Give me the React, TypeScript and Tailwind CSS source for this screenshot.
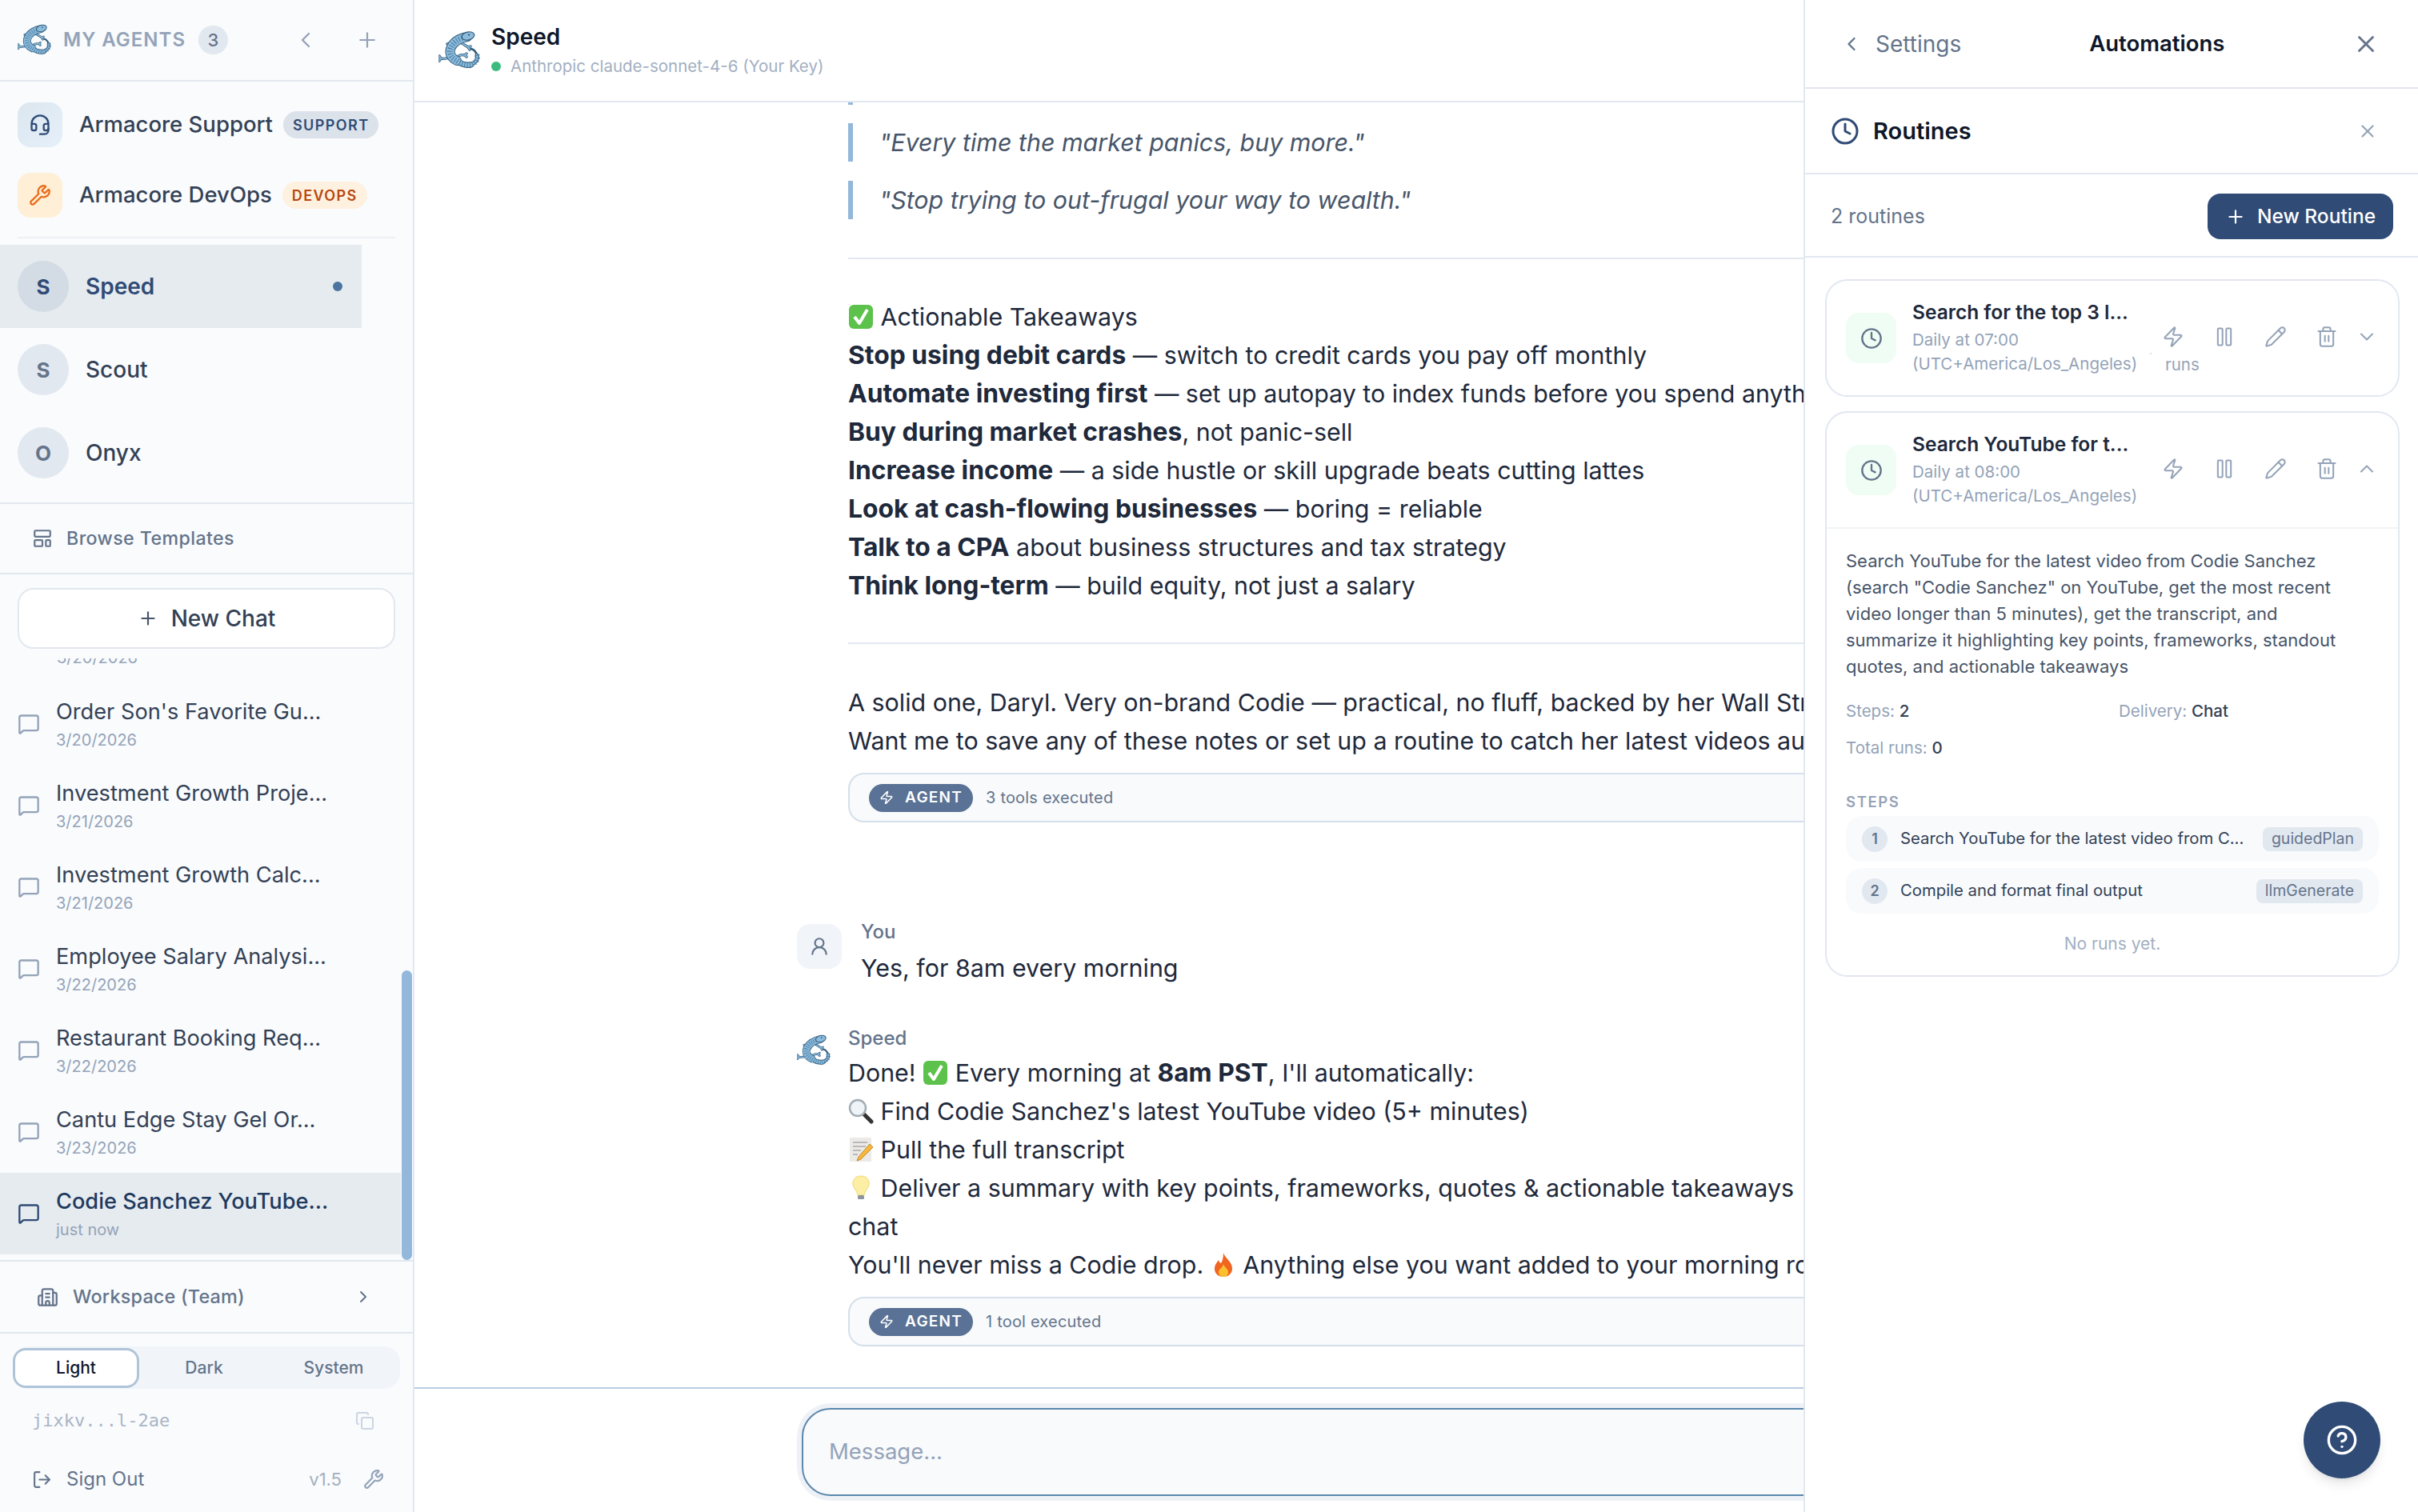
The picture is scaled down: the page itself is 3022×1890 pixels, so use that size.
import { Building2, ChevronDown, ChevronLeft, ChevronRight, ChevronUp, CircleHelp, Clock, Copy, Headset, LayoutTemplate, LogOut, MessageSquare, Pause, Pencil, Plus, Trash2, UserRound, Wrench, X, Zap } from 'lucide-react';
import type { ReactNode } from 'react';

// lizard mark, traced by hand from the reference
const Lizard = ({ className }: { className: string }) => {
  const legs = 'M33 21 C38 23 42 26 45 28 M45 28 L48 27 M45 28 L47 31 M26 40 C20 42 15 43 11 42 M11 42 L9 39 M11 42 L9 45 M30 42 C33 38 37 37 41 38 M41 38 L43 36 M41 38 L43 40 M25 24 C23 23 21 23 19 24';
  const body = 'M44 15 C33 17 26 22 23 30 C21 37 25 42 31 45';
  const tailA = 'M31 45 C36 49 43 51 48 50';
  const tailB = 'M48 50 C54 48 58 43 56 38';
  const tailC = 'M56 38 C55 34 52 31 49 30';
  return (
    <svg viewBox="8 7 52 50" fill="none" strokeLinecap="round" className={`shrink-0 ${className}`}>
      <path d={legs} stroke="#2f5a7a" strokeWidth="3.4" />
      <path d={legs} stroke="#8cbbdc" strokeWidth="1.8" />
      <path d={body} stroke="#2f5a7a" strokeWidth="12" />
      <path d={tailA} stroke="#2f5a7a" strokeWidth="7.5" />
      <path d={tailB} stroke="#2f5a7a" strokeWidth="5" />
      <path d={tailC} stroke="#2f5a7a" strokeWidth="2.6" />
      <path d={body} stroke="#8cbbdc" strokeWidth="10" />
      <path d={tailA} stroke="#8cbbdc" strokeWidth="5.5" />
      <path d={tailB} stroke="#8cbbdc" strokeWidth="3" />
      <path d={`${body} C36 49 43 51 48 50 C54 48 58 43 56 38`} stroke="#3f7297" strokeWidth="7" strokeDasharray="0.9 2.4" strokeLinecap="butt" />
      <ellipse cx="45" cy="14" rx="8" ry="5" transform="rotate(-14 45 14)" fill="#8cbbdc" stroke="#2f5a7a" strokeWidth="1.2" />
      <circle cx="46" cy="12.5" r="1" fill="#1f3d55" />
    </svg>
  );
};

const CheckEmoji = () => (
  <svg viewBox="0 0 32 32" className="inline-block w-[32px] h-[32px] align-[-5px]">
    <rect x="1" y="1" width="30" height="30" rx="6" fill="#5cc24b" />
    <path d="M8 16 L14 24 L24 7" fill="none" stroke="#fff" strokeWidth="4" strokeLinejoin="round" />
  </svg>
);

const SearchEmoji = () => (
  <svg viewBox="0 0 32 32" className="inline-block w-[32px] h-[32px] align-[-5px]">
    <path d="M19 19 L29 29" stroke="#333" strokeWidth="5" strokeLinecap="round" />
    <circle cx="12" cy="12" r="10" fill="#eef4f8" stroke="#a3adb5" strokeWidth="2.5" />
  </svg>
);

const MemoEmoji = () => (
  <svg viewBox="0 0 32 32" className="inline-block w-[32px] h-[32px] align-[-5px]">
    <rect x="2" y="1" width="27" height="30" fill="#eceae6" />
    <path d="M6 7 H24 M6 12 H22 M6 17 H16 M6 22 H12" stroke="#a9a9a9" strokeWidth="1.5" />
    <path d="M27 9 L13 25 L11 30 L16 28 L31 13 Z" fill="#f5b93e" stroke="#c8862a" strokeWidth="1" />
  </svg>
);

const BulbEmoji = () => (
  <svg viewBox="0 0 32 32" className="inline-block w-[32px] h-[32px] align-[-5px]">
    <path d="M16 1 C8 1 5 7 6 12 C7 17 11 19 12 25 H20 C21 19 25 17 26 12 C27 7 24 1 16 1 Z" fill="#fdeea6" stroke="#f4d96c" />
    <rect x="12" y="25" width="8" height="5" rx="1.5" fill="#8d949b" />
  </svg>
);

const FireEmoji = () => (
  <svg viewBox="0 0 32 32" className="inline-block w-[32px] h-[32px] align-[-5px]">
    <path d="M16 1 C18 8 27 12 27 21 C27 27 22 31 16 31 C10 31 5 27 5 21 C5 16 8 13 10 10 C11 13 12 14 13 14 C15 11 16 6 16 1 Z" fill="#f0651f" />
    <path d="M16 15 C17 19 22 21 22 25 C22 29 19 31 16 31 C13 31 10 29 10 25 C10 21 15 20 16 15 Z" fill="#fbc02d" />
  </svg>
);

const chats = [
  { title: "Order Son's Favorite Gu...", date: '3/20/2026' },
  { title: 'Investment Growth Proje...', date: '3/21/2026' },
  { title: 'Investment Growth Calc...', date: '3/21/2026' },
  { title: 'Employee Salary Analysi...', date: '3/22/2026' },
  { title: 'Restaurant Booking Req...', date: '3/22/2026' },
  { title: 'Cantu Edge Stay Gel Or...', date: '3/23/2026' },
];

const AgentRow = ({ letter, name, active }: { letter: string; name: string; active?: boolean }) => (
  <div className={`h-[104px] flex items-center pl-[22px] pr-[24px] ${active ? 'bg-[#e6ebef]' : ''}`}>
    <div className={`w-[64px] h-[64px] shrink-0 rounded-full flex items-center justify-center text-[26px] font-bold ${active ? 'bg-[#d3dce4] text-[#2f4b76]' : 'bg-[#e2e8f0] text-[#64748b]'}`}>{letter}</div>
    <span className={`ml-[21px] flex-1 text-[28px] ${active ? 'font-semibold text-[#2f4b76]' : 'font-medium text-[#334155]'}`}>{name}</span>
    {active && <span className="w-[12px] h-[12px] rounded-full bg-[#4a759f]" />}
  </div>
);

const Sidebar = () => (
  <aside className="w-[518px] shrink-0 h-full flex flex-col border-r-2 border-[#e2e8f0] bg-[#f9fbfd] pb-[23px]">
    <div className="h-[102px] shrink-0 flex items-center pl-[22px] border-b-2 border-[#e2e8f0]">
      <Lizard className="w-[42px] h-[42px]" />
      <span className="ml-[15px] text-[24px] font-semibold tracking-[1px] text-[#94a3b8]">MY AGENTS</span>
      <span className="ml-[16px] w-[37px] h-[36px] rounded-full bg-[#e2e8f0] text-[22px] font-medium text-[#64748b] flex items-center justify-center">3</span>
      <ChevronLeft className="ml-[81px] w-[32px] h-[32px] text-[#94a3b8]" strokeWidth={1.75} />
      <Plus className="ml-[46px] w-[30px] h-[30px] text-[#94a3b8]" strokeWidth={1.75} />
    </div>
    <div className="shrink-0 px-[22px] pt-[26px] flex flex-col gap-[32px]">
      <div className="flex items-center">
        <div className="w-[56px] h-[56px] shrink-0 rounded-[16px] bg-gradient-to-br from-[#dbe6ef] to-[#e5f0fa] flex items-center justify-center">
          <Headset className="w-[28px] h-[28px] text-[#2f4b76]" strokeWidth={2} />
        </div>
        <span className="ml-[21px] text-[27.5px] font-medium text-[#334155] whitespace-nowrap">Armacore Support</span>
        <span className="ml-[13px] h-[34px] px-[12px] rounded-full bg-[#dbe2e9] text-[18px] font-semibold tracking-[1.4px] text-[#2f4b76] flex items-center">SUPPORT</span>
      </div>
      <div className="flex items-center">
        <div className="w-[56px] h-[56px] shrink-0 rounded-[16px] bg-[#ffefd6] flex items-center justify-center">
          <Wrench className="w-[28px] h-[28px] text-[#ea6c1a]" strokeWidth={2} />
        </div>
        <span className="ml-[21px] text-[27.5px] font-medium text-[#334155] whitespace-nowrap">Armacore DevOps</span>
        <span className="ml-[13px] h-[34px] px-[12px] rounded-full bg-[#fff1e0] text-[18px] font-semibold tracking-[1.4px] text-[#b7480f] flex items-center">DEVOPS</span>
      </div>
    </div>
    <div className="shrink-0 h-[2px] mx-[22px] mt-[24px] mb-[8px] bg-[#edf1f5]" />
    <div className="shrink-0 w-[452px]">
      <AgentRow letter="S" name="Speed" active />
      <AgentRow letter="S" name="Scout" />
      <AgentRow letter="O" name="Onyx" />
    </div>
    <div className="shrink-0 mt-[10px] h-[90px] border-y-2 border-[#e2e8f0] flex items-center pl-[40px] text-[23.2px] font-medium tracking-[0.4px] text-[#64748b]">
      <LayoutTemplate className="w-[26px] h-[26px] text-[#64748b]" strokeWidth={2} />
      <span className="ml-[17px]">Browse Templates</span>
    </div>
    <div className="shrink-0 px-[22px] pt-[17px] pb-[12px]">
      <div className="h-[76px] rounded-[20px] border-2 border-[#e2e8f0] bg-white flex items-center justify-center text-[28px] font-medium text-[#334155]">
        <Plus className="w-[26px] h-[26px] text-[#475569] mr-[16px]" strokeWidth={2} />
        New Chat
      </div>
    </div>
    <div className="relative flex-1 min-h-0 overflow-hidden border-b-2 border-[#e2e8f0]">
      <div className="h-[31px] overflow-hidden flex flex-col justify-end">
        <div className="pl-[71px] pb-[18px] text-[20px] leading-[28px] text-[#94a3b8]">3/20/2026</div>
      </div>
      {chats.map((chat) => (
        <div key={chat.title + chat.date} className="h-[102px] flex items-center pl-[22px]">
          <MessageSquare className="w-[28px] h-[28px] shrink-0 text-[#94a3b8]" strokeWidth={2} />
          <div className="ml-[20px] flex flex-col gap-[3px]">
            <span className="text-[27.2px] leading-[36px] text-[#334155]">{chat.title}</span>
            <span className="text-[20px] leading-[28px] text-[#94a3b8]">{chat.date}</span>
          </div>
        </div>
      ))}
      <div className="h-[102px] mr-[15px] bg-[#e6ebef] flex items-center pl-[22px]">
        <MessageSquare className="w-[28px] h-[28px] shrink-0 text-[#2f4b76]" strokeWidth={2} />
        <div className="ml-[20px] flex flex-col gap-[3px]">
          <span className="text-[27.2px] leading-[36px] font-medium text-[#1e3a5f]">Codie Sanchez YouTube...</span>
          <span className="text-[20px] leading-[28px] text-[#94a3b8]">just now</span>
        </div>
      </div>
      <div className="absolute right-[1px] bottom-0 w-[13px] h-[362px] rounded-full bg-[#93b8dc]" />
    </div>
    <div className="h-[90px] shrink-0 border-b-2 border-[#e2e8f0] flex items-center pl-[46px] pr-[50px] text-[23.4px] tracking-[0.2px] text-[#64748b]">
      <Building2 className="w-[27px] h-[27px]" strokeWidth={2} />
      <span className="ml-[18px] flex-1 font-medium">Workspace (Team)</span>
      <ChevronRight className="w-[24px] h-[24px]" strokeWidth={2} />
    </div>
    <div className="shrink-0 mx-[16px] mt-[16px] h-[53px] rounded-[20px] bg-[#f1f5f9] flex items-center text-[21px] font-medium text-[#64748b]">
      <div className="w-[158px] h-[50px] rounded-[16px] border-[3px] border-[#b0c4d8] bg-white flex items-center justify-center text-[#0f172a]">Light</div>
      <div className="w-[162px] text-center">Dark</div>
      <div className="w-[162px] text-center">System</div>
    </div>
    <div className="shrink-0 mt-[23px] pl-[40px] pr-[48px] flex items-center justify-between font-['DejaVu_Sans_Mono',monospace] text-[22px] text-[#a9b5c5]">
      <span>jixkv...l-2ae</span>
      <Copy className="w-[24px] h-[24px] text-[#cbd5e1]" strokeWidth={2} />
    </div>
    <div className="shrink-0 mt-[39px] pl-[40px] pr-[36px] flex items-center text-[24px] text-[#64748b]">
      <LogOut className="w-[25px] h-[25px]" strokeWidth={2} />
      <span className="ml-[18px] flex-1">Sign Out</span>
      <span className="text-[22px] text-[#a3afbf]">v1.5</span>
      <Wrench className="ml-[27px] w-[26px] h-[26px] text-[#94a3b8]" strokeWidth={2} />
    </div>
  </aside>
);

const AgentBar = ({ label }: { label: string }) => (
  <div className="mt-[16px] w-[1400px] h-[62px] rounded-[20px] border-2 border-[#d5e0ea] bg-[#f8fafc] flex items-center pl-[24px]">
    <span className="h-[35px] w-[130px] rounded-full bg-[#5a7295] text-white flex items-center justify-center text-[19px] font-semibold tracking-[1.2px]">
      <Zap className="w-[18px] h-[18px] mr-[14px]" strokeWidth={2} />
      AGENT
    </span>
    <span className="ml-[16px] text-[20px] text-[#64748b] tracking-[0.2px]">{label}</span>
  </div>
);

const Line = ({ children }: { children: ReactNode }) => <div className="h-[48px] leading-[48px] whitespace-nowrap">{children}</div>;

const Strong = ({ children }: { children: ReactNode }) => <b className="font-bold text-[31.8px] text-[#1e293b]">{children}</b>;

const Main = () => (
  <main className="flex-1 min-w-0 h-full flex flex-col overflow-hidden bg-white">
    <header className="h-[128px] shrink-0 border-b-2 border-[#e2e8f0] flex items-center pl-[30px]">
      <Lizard className="w-[52px] h-[52px]" />
      <div className="ml-[14px] -mt-[1px]">
        <div className="text-[28px] leading-[36px] font-semibold text-[#0f172a]">Speed</div>
        <div className="flex items-center mt-[5px] h-[28px]">
          <span className="w-[12px] h-[12px] rounded-full bg-[#3dbb7f]" />
          <span className="ml-[12px] text-[20.5px] text-[#a3afc2]">Anthropic claude-sonnet-4-6 (Your Key)</span>
        </div>
      </div>
    </header>
    <div className="flex-1 min-h-0 overflow-hidden pl-[478px] text-[30.4px] text-[#1e293b]">
      <div className="ml-[64px] w-[6px] h-[3px] bg-[#93b8dc]" />
      <div className="ml-[64px] mt-[23px] border-l-[6px] border-[#93b8dc] pl-[33px] h-[48px] leading-[48px] italic text-[#475569] whitespace-nowrap">"Every time the market panics, buy more."</div>
      <div className="ml-[64px] mt-[24px] border-l-[6px] border-[#93b8dc] pl-[33px] h-[48px] leading-[48px] italic text-[#475569] whitespace-nowrap">"Stop trying to out-frugal your way to wealth."</div>
      <div className="ml-[64px] mt-[48px] h-[2px] bg-[#e2e8f0]" />
      <div className="ml-[64px] mt-[48px]">
        <Line><CheckEmoji /> Actionable Takeaways</Line>
        <Line><Strong>Stop using debit cards</Strong> — switch to credit cards you pay off monthly</Line>
        <Line><Strong>Automate investing first</Strong> — set up autopay to index funds before you spend anything</Line>
        <Line><Strong>Buy during market crashes</Strong>, not panic-sell</Line>
        <Line><Strong>Increase income</Strong> — a side hustle or skill upgrade beats cutting lattes</Line>
        <Line><Strong>Look at cash-flowing businesses</Strong> — boring = reliable</Line>
        <Line><Strong>Talk to a CPA</Strong> about business structures and tax strategy</Line>
        <Line><Strong>Think long-term</Strong> — build equity, not just a salary</Line>
      </div>
      <div className="ml-[64px] mt-[47px] h-[2px] bg-[#e2e8f0]" />
      <div className="ml-[64px] mt-[49px]">
        <Line>A solid one, Daryl. Very on-brand Codie — practical, no fluff, backed by her Wall Street career.</Line>
        <Line>Want me to save any of these notes or set up a routine to catch her latest videos automatically?</Line>
        <AgentBar label="3 tools executed" />
      </div>
      <div className="mt-[121px] flex">
        <div className="mt-[6px] w-[56px] h-[56px] shrink-0 rounded-[16px] bg-[#f1f5f9] flex items-center justify-center">
          <UserRound className="w-[26px] h-[26px] text-[#64748b]" strokeWidth={2} />
        </div>
        <div className="ml-[24px]">
          <div className="text-[24px] leading-[32px] font-medium text-[#64748b]">You</div>
          <div className="mt-[5px] leading-[48px]">Yes, for 8am every morning</div>
        </div>
      </div>
      <div className="mt-[50px] flex">
        <Lizard className="mt-[8px] w-[42px] h-[42px]" />
        <div className="ml-[22px]">
          <div className="text-[24px] leading-[28px] mb-[5px] font-medium text-[#64748b]">Speed</div>
          <Line>Done! <CheckEmoji /> Every morning at <Strong>8am PST</Strong>, I'll automatically:</Line>
          <Line><SearchEmoji /> Find Codie Sanchez's latest YouTube video (5+ minutes)</Line>
          <Line><MemoEmoji /> Pull the full transcript</Line>
          <Line><BulbEmoji /> Deliver a summary with key points, frameworks, quotes &amp; actionable takeaways</Line>
          <Line>chat</Line>
          <Line>You'll never miss a Codie drop. <FireEmoji /> Anything else you want added to your morning routine?</Line>
          <AgentBar label="1 tool executed" />
        </div>
      </div>
    </div>
    <div className="h-[156px] shrink-0 border-t-2 border-[#b8cfe3] pl-[484px] pt-[24px]">
      <div className="w-[1400px] h-[110px] rounded-[36px] border-2 border-[#5b88ad] bg-[#f8fafc] ring-[6px] ring-[#eef2f7] flex items-center pl-[32px] text-[27.5px] text-[#94a3b8]">Message...</div>
    </div>
  </main>
);

const RoutineHead = ({ title, time, open, runs }: { title: string; time: string; open?: boolean; runs?: boolean }) => (
  <div className="h-[143px] flex items-center pl-[24px] pr-[28px] relative">
    <div className="w-[63px] h-[63px] shrink-0 rounded-[16px] bg-[#f0fdf4] flex items-center justify-center">
      <Clock className="w-[28px] h-[28px] text-[#64748b]" strokeWidth={2} />
    </div>
    <div className="ml-[20px] w-[296px] shrink-0 -mt-[2px]">
      <div className="text-[24.5px] leading-[32px] font-semibold text-[#1e293b] whitespace-nowrap">{title}</div>
      <div className="mt-[4px] text-[20.5px] leading-[30px] text-[#94a3b8] whitespace-nowrap">{time}</div>
      <div className="text-[20.5px] leading-[30px] text-[#94a3b8] whitespace-nowrap">(UTC+America/Los_Angeles)</div>
    </div>
    <div className="flex items-center text-[#94a3b8] -mt-[4px]">
      <Zap className="ml-[16px] w-[28px] h-[28px]" strokeWidth={1.75} />
      <Pause className="ml-[36px] w-[28px] h-[28px]" strokeWidth={1.75} />
      <Pencil className="ml-[36px] w-[28px] h-[28px]" strokeWidth={1.75} />
      <Trash2 className="ml-[36px] w-[28px] h-[28px]" strokeWidth={1.75} />
      {open ? <ChevronUp className="ml-[22px] w-[28px] h-[28px]" strokeWidth={1.75} /> : <ChevronDown className="ml-[22px] w-[28px] h-[28px]" strokeWidth={1.75} />}
    </div>
    {runs && <span className="absolute left-[404px] top-[90px] w-[2px] h-[2px] rounded-full bg-[#cbd5e1]" />}
    {runs && <span className="absolute left-[423px] top-[91px] text-[20.5px] leading-[28px] text-[#94a3b8]">runs</span>}
  </div>
);

const Step = ({ n, text, tag }: { n: number; text: string; tag: string }) => (
  <div className="h-[57px] rounded-[20px] bg-[#f8fafc] flex items-center pl-[20px] pr-[20px]">
    <span className="w-[32px] h-[32px] rounded-full bg-[#e2e8f0] text-[18px] font-semibold text-[#64748b] flex items-center justify-center">{n}</span>
    <span className="ml-[16px] flex-1 text-[20.3px] text-[#334155] whitespace-nowrap">{text}</span>
    <span className="h-[30px] px-[11px] rounded-[8px] bg-[#e2e8f0] text-[19.5px] text-[#64748b] flex items-center">{tag}</span>
  </div>
);

const Panel = () => (
  <section className="w-[768px] shrink-0 h-full border-l-2 border-[#e2e8f0] bg-white flex flex-col">
    <div className="h-[111px] shrink-0 border-b-2 border-[#e2e8f0] flex items-center pl-[44px] pr-[48px]">
      <ChevronLeft className="w-[28px] h-[28px] text-[#64748b]" strokeWidth={2} />
      <span className="ml-[16px] text-[28px] text-[#64748b]">Settings</span>
      <span className="ml-[160px] flex-1 text-[27.5px] font-semibold text-[#0f172a]">Automations</span>
      <X className="w-[34px] h-[34px] text-[#64748b]" strokeWidth={2} />
    </div>
    <div className="h-[107px] shrink-0 border-b-2 border-[#e2e8f0] flex items-center pl-[32px] pr-[50px]">
      <Clock className="w-[36px] h-[36px] text-[#2f4b76]" strokeWidth={2} />
      <span className="ml-[17px] flex-1 text-[29px] font-semibold text-[#0f172a]">Routines</span>
      <X className="w-[26px] h-[26px] text-[#94a3b8]" strokeWidth={2} />
    </div>
    <div className="h-[104px] shrink-0 border-b-2 border-[#e2e8f0] flex items-center justify-between pl-[32px] pr-[31px] pt-[3px]">
      <span className="text-[25px] text-[#64748b]">2 routines</span>
      <span className="h-[57px] w-[232px] rounded-[16px] bg-[#2f4b76] text-white text-[24.5px] font-medium flex items-center justify-center">
        <Plus className="w-[26px] h-[26px] mr-[14px]" strokeWidth={2} />
        New Routine
      </span>
    </div>
    <div className="flex-1 min-h-0 pl-[25px] pr-[23px] pt-[27px] flex flex-col gap-[18px]">
      <div className="h-[147px] rounded-[28px] border-2 border-[#e2e8f0]">
        <RoutineHead title="Search for the top 3 l..." time="Daily at 07:00" runs />
      </div>
      <div className="h-[707px] rounded-[28px] border-2 border-[#e2e8f0]">
        <RoutineHead title="Search YouTube for t..." time="Daily at 08:00" open />
        <div className="border-t-2 border-[#f1f5f9] px-[24px] pt-[24px]">
          <p className="w-[640px] text-[22px] leading-[33px] text-[#475569]">
            Search YouTube for the latest video from Codie Sanchez (search "Codie Sanchez" on YouTube, get the most recent video longer than 5 minutes), get the transcript, and summarize it highlighting key points, frameworks, standout quotes, and actionable takeaways
          </p>
          <div className="mt-[24px] grid grid-cols-2 gap-y-[16px] text-[20.5px] leading-[30px] text-[#94a3b8]">
            <div>Steps: <span className="font-medium text-[#334155]">2</span></div>
            <div className="pl-[8px]">Delivery: <span className="font-medium text-[#334155]">Chat</span></div>
            <div>Total runs: <span className="font-medium text-[#334155]">0</span></div>
          </div>
          <div className="mt-[38px] text-[18.5px] leading-[28px] font-semibold tracking-[1.6px] text-[#94a3b8]">STEPS</div>
          <div className="mt-[4px] flex flex-col gap-[8px]">
            <Step n={1} text="Search YouTube for the latest video from C..." tag="guidedPlan" />
            <Step n={2} text="Compile and format final output" tag="llmGenerate" />
          </div>
          <div className="mt-[22px] text-center text-[21px] text-[#a3afc2]">No runs yet.</div>
        </div>
      </div>
      <div className="flex-1 flex justify-end items-end pr-[24px] pb-[42px]">
        <div className="w-[96px] h-[96px] rounded-full bg-[#2f4b76] shadow-lg flex items-center justify-center">
          <CircleHelp className="w-[40px] h-[40px] text-white" strokeWidth={2} />
        </div>
      </div>
    </div>
  </section>
);

const App = () => (
  <div className="w-[3022px] h-[1890px] flex overflow-hidden font-['Inter',sans-serif]">
    <Sidebar />
    <Main />
    <Panel />
  </div>
);

export default App;
